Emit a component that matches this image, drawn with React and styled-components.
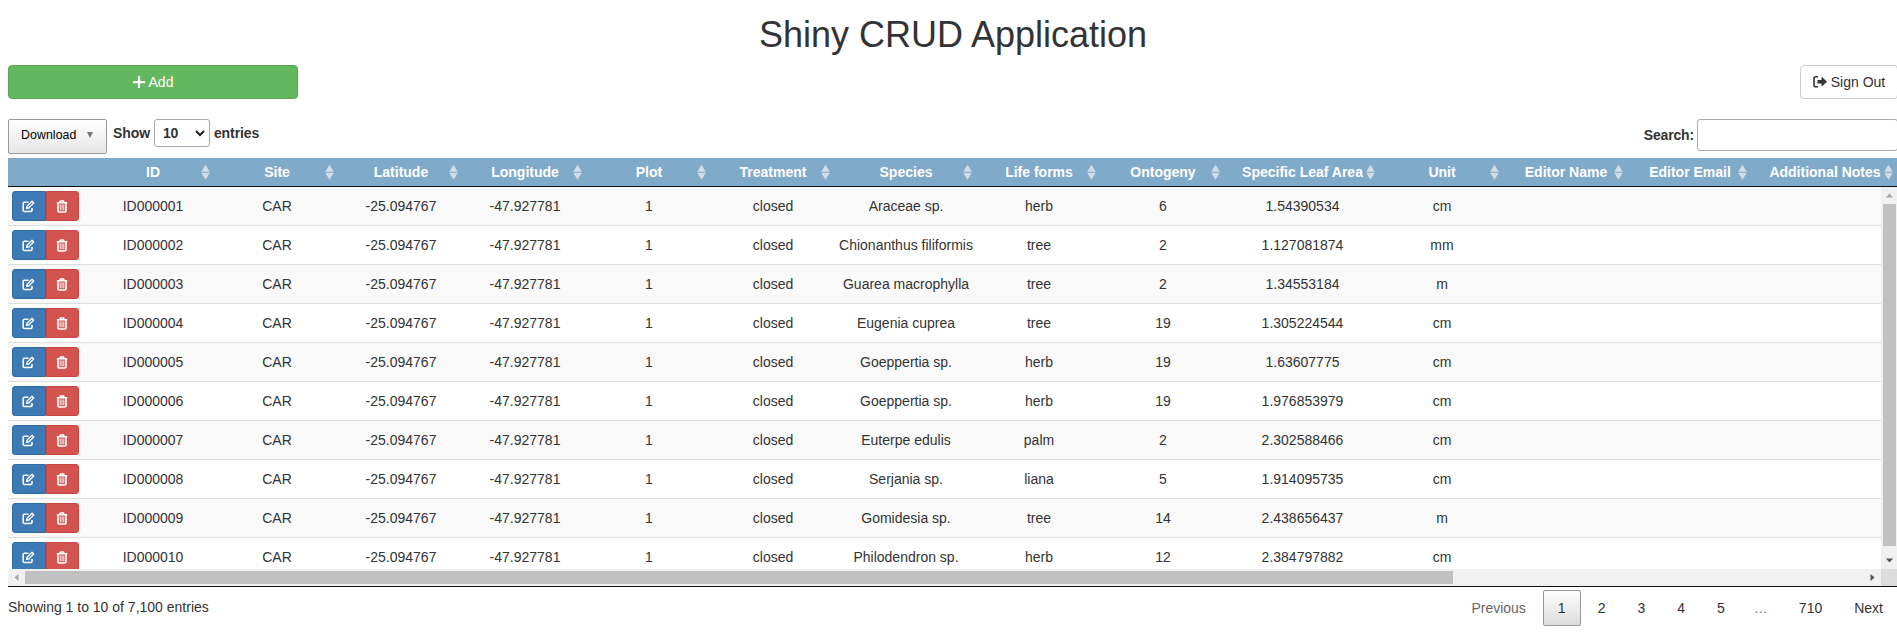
import React from "react";
import styled, { createGlobalStyle } from "styled-components";

const GlobalStyle = createGlobalStyle`
  * { box-sizing: border-box; }
  html, body { margin: 0; overflow: hidden; background: #fff; }
  body { font: 14px/20px "Liberation Sans", Arial, sans-serif; color: #333; }
`;

const Page = styled.main`
  width: 1898px;
  height: 640px;
  padding-left: 8px;
`;

const Title = styled.h1`
  margin: 0;
  padding: 15px 0 10px;
  height: 65px;
  font-size: 36px;
  font-weight: 400;
  line-height: 40px;
  text-align: center;
`;

const Actions = styled.div`
  display: flex;
  justify-content: space-between;
  height: 54px;
`;

const Button = styled.button`
  display: flex;
  align-items: center;
  justify-content: center;
  gap: 4px;
  width: ${(p) => p.$width}px;
  height: 34px;
  padding: 0;
  border: 1px solid ${(p) => (p.$success ? "#55a655" : "#ccc")};
  border-radius: 4px;
  background: ${(p) => (p.$success ? "#63b75e" : "#fff")};
  color: ${(p) => (p.$success ? "#fff" : "#333")};
  font: inherit;
`;

const Controls = styled.div`
  display: flex;
  align-items: flex-start;
  height: 39px;
  font-weight: 700;
`;

const Download = styled.button`
  display: flex;
  align-items: center;
  gap: 10px;
  width: 99px;
  height: 35px;
  padding: 0 0 4px 12px;
  border: 1px solid #999;
  border-radius: 2px;
  background: linear-gradient(#fff, #e6e6e6);
  color: #000;
  font: 12.3px/20px "Liberation Sans", Arial, sans-serif;
  letter-spacing: 0.1px;
`;

const Caret = styled.span`
  width: 0;
  height: 0;
  border: solid transparent;
  border-width: 6px 3px 0;
  border-top-color: #777;
`;

const Length = styled.label`
  display: flex;
  align-items: center;
  gap: 4px;
  height: 28px;
  margin-left: 6px;
  letter-spacing: -0.1px;
`;

const LengthSelect = styled.span`
  display: flex;
  align-items: center;
  justify-content: space-between;
  width: 56px;
  height: 28px;
  padding: 0 4px 0 8px;
  border: 1px solid #aaa;
  border-radius: 3px;
`;

const Search = styled.label`
  display: flex;
  align-items: center;
  gap: 3px;
  margin-left: auto;
  letter-spacing: -0.15px;
`;

const SearchInput = styled.input`
  width: 201px;
  height: 32px;
  border: 1px solid #aaa;
  border-radius: 3px;
  background: transparent;
`;

const Grid = styled.div`
  display: grid;
  grid-template-columns: 83px repeat(6, 124px) 142px 124px 124px 155px repeat(3, 124px) 146px;
  width: 1890px;
`;

const Head = styled(Grid)`
  height: 29px;
  border-bottom: 1px solid #111;
  background: #80aaca;
  color: #fff;
  font-weight: 700;
`;

const HeadCell = styled.div`
  display: flex;
  align-items: center;
  padding: 0 3px 0 16px;
  white-space: nowrap;

  span { flex: 1; display: flex; justify-content: center; }
`;

const Body = styled.div`
  display: grid;
  grid-template-columns: 1873px 17px;
  grid-template-rows: 382px 17px;
  height: 400px;
  border-bottom: 1px solid #111;
`;

const Rows = styled.div`
  overflow: hidden;
`;

const Row = styled(Grid)`
  height: 39px;
  padding-top: 1px;
  border-top: 1px solid #ddd;
  background: ${(p) => (p.$odd ? "#f9f9f9" : "#fff")};

  &:first-child { height: 38px; border-top: 0; }
`;

const Cell = styled.div`
  display: flex;
  align-items: center;
  justify-content: center;
  padding-bottom: 2px;
  white-space: nowrap;
`;

const ButtonGroup = styled.div`
  display: flex;
  padding: 3px 0 0 4px;
`;

const IconButton = styled.button`
  display: flex;
  align-items: center;
  justify-content: center;
  width: ${(p) => (p.$danger ? 33 : 34)}px;
  height: 30px;
  padding: 0 1px 0 0;
  border: 1px solid ${(p) => (p.$danger ? "#c9453f" : "#2e6da4")};
  border-radius: ${(p) => (p.$danger ? "0 3px 3px 0" : "3px 0 0 3px")};
  background: ${(p) => (p.$danger ? "#d3544f" : "#3c79b5")};
  color: #fff;
`;

const VScroll = styled.div`
  display: flex;
  flex-direction: column;
  align-items: center;
  background: #f0f0f0;
`;

const HScroll = styled.div`
  display: flex;
  align-items: center;
  background: #f0f0f0;
`;

const Thumb = styled.div`
  width: ${(p) => p.$w}px;
  height: ${(p) => p.$h}px;
  background: #c1c1c1;
`;

const Arrow = styled.div`
  display: flex;
  align-items: center;
  justify-content: center;
  width: 17px;
  height: 17px;
  ${(p) => p.$end && "margin-left: auto;"}
  ${(p) => p.$bottom && "margin-top: auto;"}
`;

const Corner = styled.div`
  background: #dcdcdc;
`;

const Footer = styled.footer`
  display: flex;
  align-items: flex-start;
  justify-content: space-between;
  padding-top: 3px;
`;

const Info = styled.div`
  padding-top: 7px;
`;

const Pages = styled.nav`
  display: flex;
`;

const PageButton = styled.span`
  min-width: 37.8px;
  height: 36px;
  margin-left: 2px;
  padding: 7px 14px;
  border: 1px solid ${(p) => (p.$current ? "#979797" : "transparent")};
  border-radius: 2px;
  background: ${(p) => (p.$current ? "linear-gradient(#fff, #dcdcdc)" : "none")};
  color: ${(p) => (p.$muted ? "#666" : "#333")};
  text-align: center;
`;

const Ellipsis = styled.span`
  padding: 8px 14px;
  color: #777;
`;

const SortIcon = () => (
  <svg width="13" height="17" viewBox="0 0 13 17" fill="#d1dce5">
    <path d="M2.2 7.700 6.500 0.700l4.300 7zM2.200 8.700h8.600L6.500 15.700z" />
  </svg>
);

const PlusIcon = () => (
  <svg width="12" height="12" viewBox="0 0 12 12">
    <path d="M6 1v10.500M0.700 6.200h10.600" stroke="#fff" strokeWidth="2.200" strokeLinecap="round" />
  </svg>
);

const EditIcon = () => (
  <svg width="13" height="13" viewBox="0 0 13 13" fill="none" stroke="#fff">
    <path d="M6.500 2.300H2.400Q1.200 2.300 1.200 3.500v6.800q0 1.200 1.200 1.200h6.400q1.200 0 1.200-1.200V8" strokeWidth="1.600" />
    <path d="M4.600 8.400 5 6.300l5-5 1.700 1.700-5 5z" strokeWidth="1.300" strokeLinejoin="round" />
  </svg>
);

const TrashIcon = () => (
  <svg width="12" height="13" viewBox="0 0 12 13" fill="none" stroke="#fff">
    <path d="M0.800 2.700h10.400M3.800 2.500 4.500 1h3l.7 1.500" strokeWidth="1.600" />
    <path d="M2 3v7.800q0 1.200 1.200 1.200h5.600q1.200 0 1.200-1.200V3" strokeWidth="1.600" />
    <path d="M4.200 4.500v5.800M6 4.500v5.800M7.800 4.500v5.800" strokeWidth="0.900" />
  </svg>
);

const SignOutIcon = () => (
  <svg width="14" height="14" viewBox="0 0 14 14">
    <path d="M5 1.700H2.800Q1 1.700 1 3.500v6.400q0 1.800 1.800 1.800H5" fill="none" stroke="#333" strokeWidth="1.600" />
    <path d="M4.500 4.900h4V2.400q.3-.5.800-.1L14 6.700l-4.700 4.400q-.5.400-.8-.1V8.500h-4z" fill="#333" />
  </svg>
);

const Triangle = ({ angle = 0, dim }) => (
  <svg width="7" height="7" viewBox="0 0 7 7">
    <path d="M0 5.500 3.500 1.500 7 5.500z" fill={dim ? "#a3a3a3" : "#505050"} transform={`rotate(${angle} 3.5 3.5)`} />
  </svg>
);

const columns = [
  "ID", "Site", "Latitude", "Longitude", "Plot", "Treatment", "Species", "Life forms",
  "Ontogeny", "Specific Leaf Area", "Unit", "Editor Name", "Editor Email", "Additional Notes",
];

const records = [
  ["Araceae sp.", "herb", "6", "1.54390534", "cm"],
  ["Chionanthus filiformis", "tree", "2", "1.127081874", "mm"],
  ["Guarea macrophylla", "tree", "2", "1.34553184", "m"],
  ["Eugenia cuprea", "tree", "19", "1.305224544", "cm"],
  ["Goeppertia sp.", "herb", "19", "1.63607775", "cm"],
  ["Goeppertia sp.", "herb", "19", "1.976853979", "cm"],
  ["Euterpe edulis", "palm", "2", "2.302588466", "cm"],
  ["Serjania sp.", "liana", "5", "1.914095735", "cm"],
  ["Gomidesia sp.", "tree", "14", "2.438656437", "m"],
  ["Philodendron sp.", "herb", "12", "2.384797882", "cm"],
].map((rest, i) => [
  `ID${String(i + 1).padStart(6, "0")}`, "CAR", "-25.094767", "-47.927781", "1", "closed", ...rest,
]);

export default function App() {
  return (
    <Page>
      <GlobalStyle />
      <Title>Shiny CRUD Application</Title>
      <Actions>
        <Button $success $width={290}><PlusIcon />Add</Button>
        <Button $width={98}><SignOutIcon />Sign Out</Button>
      </Actions>
      <Controls>
        <Download>Download<Caret /></Download>
        <Length>
          Show
          <LengthSelect>
            10
            <svg width="10" height="7" viewBox="0 0 10 7">
              <path d="m1 1 4 4 4-4" fill="none" stroke="#222" strokeWidth="2" />
            </svg>
          </LengthSelect>
          entries
        </Length>
        <Search>Search:<SearchInput type="search" /></Search>
      </Controls>
      <Head>
        <div />
        {columns.map((name) => (
          <HeadCell key={name}><span>{name}</span><SortIcon /></HeadCell>
        ))}
      </Head>
      <Body>
        <Rows>
          {records.map((record, i) => (
            <Row key={record[0]} $odd={i % 2 === 0}>
              <ButtonGroup>
                <IconButton aria-label="Edit"><EditIcon /></IconButton>
                <IconButton $danger aria-label="Delete"><TrashIcon /></IconButton>
              </ButtonGroup>
              {record.map((value, j) => <Cell key={j}>{value}</Cell>)}
            </Row>
          ))}
        </Rows>
        <VScroll>
          <Arrow><Triangle dim /></Arrow>
          <Thumb $w={13} $h={342} />
          <Arrow $bottom><Triangle angle={180} /></Arrow>
        </VScroll>
        <HScroll>
          <Arrow><Triangle angle={-90} dim /></Arrow>
          <Thumb $w={1428} $h={13} />
          <Arrow $end><Triangle angle={90} /></Arrow>
        </HScroll>
        <Corner />
      </Body>
      <Footer>
        <Info>Showing 1 to 10 of 7,100 entries</Info>
        <Pages>
          <PageButton $muted>Previous</PageButton>
          <PageButton $current>1</PageButton>
          <PageButton>2</PageButton>
          <PageButton>3</PageButton>
          <PageButton>4</PageButton>
          <PageButton>5</PageButton>
          <Ellipsis>…</Ellipsis>
          <PageButton>710</PageButton>
          <PageButton>Next</PageButton>
        </Pages>
      </Footer>
    </Page>
  );
}
